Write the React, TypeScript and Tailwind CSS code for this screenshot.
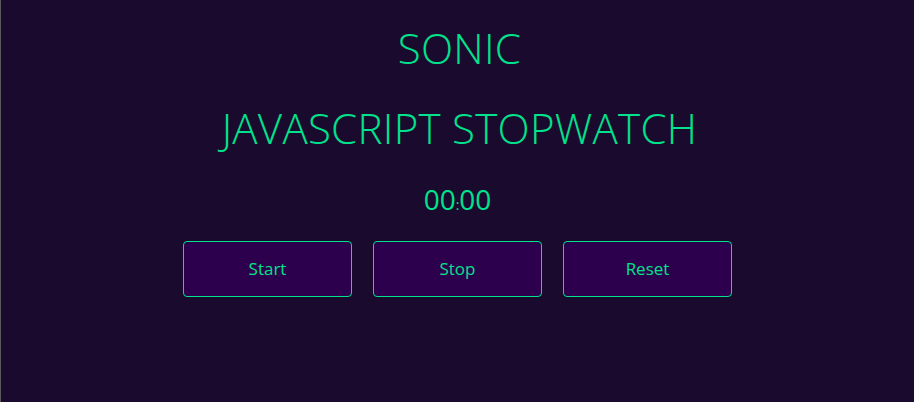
import React from "react";

export default function App() {
  const btn =
    "w-[169px] h-[56px] rounded-[4px] border border-[#00e38c] bg-[#2d004d] text-[#00e38c] text-[17px]";
  return (
    <div
      className="w-[914px] h-[402px] bg-[#1a0b2e] border-l border-[#5a5a5a] flex flex-col items-center text-[#00e38c]"
      style={{ fontFamily: '"Open Sans", sans-serif' }}
    >
      <h1 className="mt-[22px] text-[42px] font-light leading-[52px] tracking-[0.3px] pl-[4px]">SONIC</h1>
      <h2 className="mt-[28px] text-[42px] font-light leading-[52px] tracking-[0.3px] pl-[4px]">JAVASCRIPT STOPWATCH</h2>
      <div className="mt-[27px] text-[28px] leading-[36px]">
        00<span className="text-[14px]">:</span>00
      </div>
      <div className="mt-[18px] flex gap-[21px]">
        <button className={btn}>Start</button>
        <button className={btn}>Stop</button>
        <button className={btn}>Reset</button>
      </div>
    </div>
  );
}
